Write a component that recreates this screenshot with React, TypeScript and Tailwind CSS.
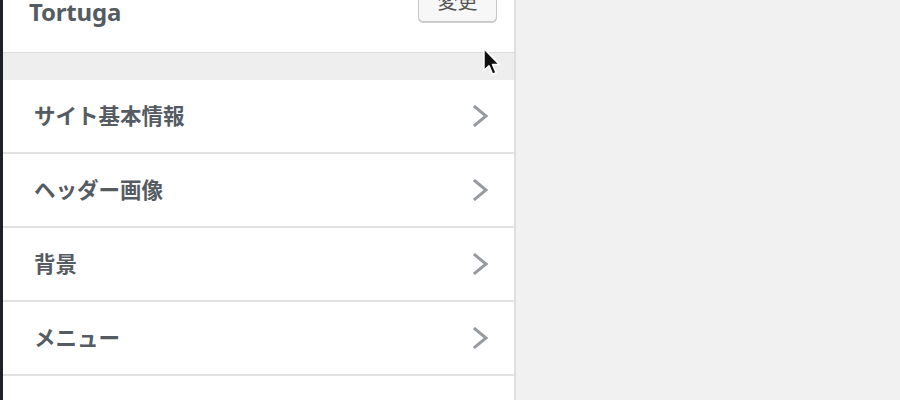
const sections = ["サイト基本情報", "ヘッダー画像", "背景", "メニュー", "ウィジェット"];

function Chevron() {
  return (
    <svg width="16" height="22" viewBox="0 0 16 22" className="shrink-0">
      <polyline
        points="2,2 13,11 2,20"
        fill="none"
        stroke="#979ba0"
        strokeWidth="3"
        strokeLinecap="square"
      />
    </svg>
  );
}

export default function App() {
  return (
    <div
      className="relative flex h-[400px] w-[900px] overflow-hidden bg-[#f1f1f1]"
      style={{ fontFamily: '"Noto Sans", "Noto Sans CJK JP", sans-serif' }}
    >
      <div className="w-[3px] shrink-0 bg-[#1e2226]" />
      <div className="flex w-[513px] shrink-0 flex-col border-r-2 border-[#dedede] bg-white">
        {/* theme header */}
        <div className="flex h-[53px] shrink-0 items-start justify-between border-b border-[#dcdcdc] pl-[26px] pr-[17px]">
          <span className="text-[24px] font-bold leading-[24px] tracking-[-0.2px] text-[#555b62]">Tortuga</span>
          <button className="-mt-[20px] flex h-[42px] w-[79px] items-center justify-center rounded-[5px] border border-[#c8c8c8] bg-[#f7f7f7] pt-[2px] text-[20px] text-[#555] shadow-[0_1px_0_#cfcfcf]">
            変更
          </button>
        </div>
        <div className="h-[27px] shrink-0 bg-[#eeeeee]" />
        {/* section list */}
        <ul className="flex flex-col">
          {sections.map((s) => (
            <li
              key={s}
              className="flex h-[74px] shrink-0 items-center justify-between border-b-2 border-[#e2e2e2] pl-[31px] pr-[25px]"
            >
              <span className="text-[21.5px] font-semibold text-[#555b62]">{s}</span>
              <Chevron />
            </li>
          ))}
        </ul>
      </div>
      <div className="flex-1" />

      {/* mouse pointer */}
      <svg width="22" height="32" viewBox="0 0 20 30" className="absolute left-[482px] top-[47px]">
        <path
          d="M1.5 1.5 L1.5 22 L6.2 17.6 L9.6 25.6 L13 24.2 L9.6 16.4 L16 16.4 Z"
          fill="#111"
          stroke="#fff"
          strokeWidth="1.5"
          strokeLinejoin="round"
        />
      </svg>
    </div>
  );
}
